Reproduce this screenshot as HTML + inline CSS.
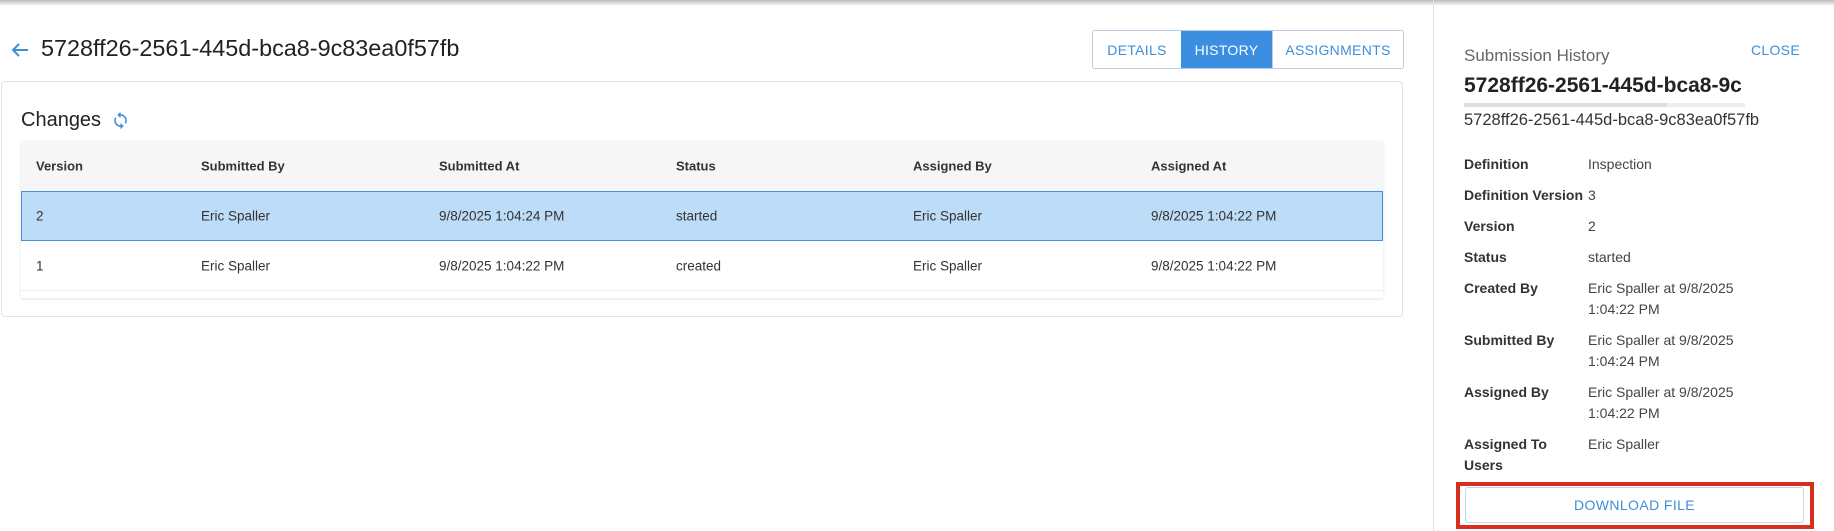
<!DOCTYPE html>
<html><head><meta charset="utf-8"><style>
*{box-sizing:border-box;margin:0;padding:0}
body{width:1834px;height:531px;background:#fff;font-family:"Liberation Sans",sans-serif;color:#222;position:relative;overflow:hidden}
.abs{position:absolute;white-space:nowrap}
.topbar{position:absolute;left:0;top:0;width:1834px;height:6px;background:linear-gradient(#bbb,#fff)}
.tabs{position:absolute;left:1092px;top:30px;width:312px;height:39px;border:1px solid #b9cde3;border-radius:3px;display:flex;overflow:hidden}
.tabs div{display:flex;align-items:center;justify-content:center;font-size:14px;color:#3d8fd9;letter-spacing:.3px}
.card{position:absolute;left:1px;top:81px;width:1402px;height:236px;border:1px solid #e3e3e3;border-radius:4px}
.tbl{position:absolute;left:21px;top:141px;width:1362px;height:157px;box-shadow:0 1px 3px rgba(0,0,0,.12)}
.hdr{position:absolute;left:0;top:0;width:100%;height:50px;background:#f6f6f6}
.row{position:absolute;left:0;width:100%;height:50px;border-bottom:1px solid #eee}
.sel{background:#bcdcf8;border:1px solid #4b8fd8}
.c{position:absolute;font-size:13.5px;top:50%;transform:translateY(-50%);white-space:nowrap;color:#333}
.h .c{font-weight:bold;color:#333;font-size:13px}
.lbl{position:absolute;left:1464px;font-size:14px;font-weight:bold;color:#333;line-height:21px}
.val{position:absolute;left:1588px;font-size:14px;color:#444;line-height:21px}
</style></head><body>
<div class="topbar"></div>
<svg class="abs" style="left:11px;top:42px" width="18" height="16" viewBox="0 0 18 16"><path d="M17 8H2M8 2L2 8l6 6" fill="none" stroke="#3d8fd9" stroke-width="2"/></svg>
<div class="abs" style="left:41px;top:35px;font-size:23.4px;color:#222">5728ff26-2561-445d-bca8-9c83ea0f57fb</div>
<div class="tabs"><div style="width:88px">DETAILS</div><div style="width:91px;background:#3b8ee0;color:#fff">HISTORY</div><div style="flex:1;border-left:1px solid #b9cde3">ASSIGNMENTS</div></div>
<div class="card"></div>
<div class="abs" style="left:21px;top:109px;font-size:20px;color:#222">Changes</div>
<svg class="abs" style="left:111px;top:111px" width="19" height="19" viewBox="0 0 24 24"><path fill="#3d8fd9" d="M12 4V1L8 5l4 4V6c3.31 0 6 2.690 6 6 0 1.01-.25 1.97-.7 2.8l1.46 1.46A7.93 7.93 0 0020 12c0-4.42-3.58-8-8-8zm0 14c-3.31 0-6-2.69-6-6 0-1.01.25-1.97.7-2.8L5.24 7.74A7.93 7.93 0 004 12c0 4.42 3.58 8 8 8v3l4-4-4-4v3z"/></svg>
<div class="tbl">
<div class="hdr h"><span class="c" style="left:15px">Version</span><span class="c" style="left:180px">Submitted By</span><span class="c" style="left:418px">Submitted At</span><span class="c" style="left:655px">Status</span><span class="c" style="left:892px">Assigned By</span><span class="c" style="left:1130px">Assigned At</span></div>
<div class="row sel" style="top:50px"><span class="c" style="left:14px">2</span><span class="c" style="left:179px">Eric Spaller</span><span class="c" style="left:417px">9/8/2025 1:04:24 PM</span><span class="c" style="left:654px">started</span><span class="c" style="left:891px">Eric Spaller</span><span class="c" style="left:1129px">9/8/2025 1:04:22 PM</span></div>
<div class="row" style="top:100px"><span class="c" style="left:15px">1</span><span class="c" style="left:180px">Eric Spaller</span><span class="c" style="left:418px">9/8/2025 1:04:22 PM</span><span class="c" style="left:655px">created</span><span class="c" style="left:892px">Eric Spaller</span><span class="c" style="left:1130px">9/8/2025 1:04:22 PM</span></div>
</div>
<div class="abs" style="left:1433px;top:0;width:1px;height:531px;background:#e0e0e0"></div>
<div class="abs" style="left:1464px;top:46px;font-size:17px;color:#666">Submission History</div>
<div class="abs" style="left:1751px;top:42px;font-size:14px;color:#3d8fd9;letter-spacing:.3px">CLOSE</div>
<div class="abs" style="left:1464px;top:74px;font-size:21px;font-weight:bold;color:#222">5728ff26-2561-445d-bca8-9c</div>
<div class="abs" style="left:1464px;top:103px;width:281px;height:4px;background:#eee"></div>
<div class="abs" style="left:1464px;top:103px;width:203px;height:4px;background:#ddd"></div>
<div class="abs" style="left:1464px;top:111px;font-size:16.5px;color:#333">5728ff26-2561-445d-bca8-9c83ea0f57fb</div>
<div class="lbl" style="top:154px">Definition</div><div class="val" style="top:154px">Inspection</div>
<div class="lbl" style="top:185px">Definition Version</div><div class="val" style="top:185px">3</div>
<div class="lbl" style="top:216px">Version</div><div class="val" style="top:216px">2</div>
<div class="lbl" style="top:247px">Status</div><div class="val" style="top:247px">started</div>
<div class="lbl" style="top:278px">Created By</div><div class="val" style="top:278px">Eric Spaller at 9/8/2025<br>1:04:22 PM</div>
<div class="lbl" style="top:330px">Submitted By</div><div class="val" style="top:330px">Eric Spaller at 9/8/2025<br>1:04:24 PM</div>
<div class="lbl" style="top:382px">Assigned By</div><div class="val" style="top:382px">Eric Spaller at 9/8/2025<br>1:04:22 PM</div>
<div class="lbl" style="top:434px">Assigned To<br>Users</div><div class="val" style="top:434px">Eric Spaller</div>
<div class="abs" style="left:1456px;top:482px;width:358px;height:47px;border:4px solid #d82e1c"></div>
<div class="abs" style="left:1465px;top:487px;width:339px;height:36px;border:1px solid #c5d6e8;border-radius:3px;display:flex;align-items:center;justify-content:center;font-size:14px;color:#3d8fd9;letter-spacing:.4px">DOWNLOAD FILE</div>
</body></html>
